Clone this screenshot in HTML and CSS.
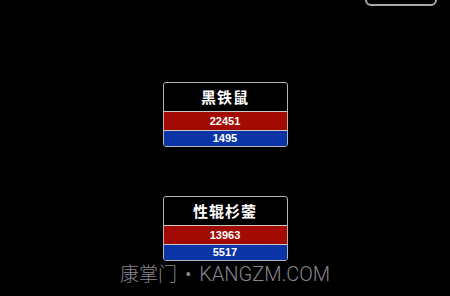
FILE: index.html
```html
<!DOCTYPE html>
<html lang="zh-CN">
<head>
    <meta charset="UTF-8">
    <title>排行</title>
    <link rel="stylesheet" href="styles.css">
</head>
<body>
    <div class="top-btn"></div>

    <div class="board">
        <div class="card">
            <div class="card-title">黑铁鼠</div>
            <div class="card-row red">22451</div>
            <div class="card-row blue">1495</div>
        </div>
        <div class="card">
            <div class="card-title">性辊杉蓥</div>
            <div class="card-row red">13963</div>
            <div class="card-row blue">5517</div>
        </div>
    </div>

    <div class="watermark"><span class="wm-cn">康掌门</span> • KANGZM.COM</div>
</body>
</html>
```

FILE: styles.css
```css
/* 页面 */
html, body {
    margin: 0;
    padding: 0;
}

body {
    background-color: #000;
    width: 450px;
    height: 296px;
    position: relative;
    overflow: hidden;
    font-family: "Liberation Sans", "Noto Sans CJK SC", sans-serif;
}

/* 右上角按钮（只露出下半部分） */
.top-btn {
    position: absolute;
    top: -22px;
    right: 13px;
    width: 68px;
    height: 24px;
    border: 2px solid #a8a8a8;
    border-radius: 6px;
}

/* 卡片列表 */
.board {
    display: flex;
    flex-direction: column;
    align-items: center;
    gap: 49px;
    padding-top: 82px;
}

.card {
    width: 123px;
    border: 1px solid #b4b4b4;
    border-radius: 3px;
    overflow: hidden;
    background-color: #000;
}

.card-title {
    height: 28px;
    line-height: 28px;
    text-align: center;
    color: #fff;
    font-size: 15px;
    font-weight: bold;
    font-family: "Noto Sans CJK SC", sans-serif;
    letter-spacing: 1px;
    border-bottom: 1px solid #c8c8c8;
}

.card-row {
    text-align: center;
    color: #fff;
    font-size: 11px;
    font-weight: bold;
}

.card-row.red {
    background-color: #a20a04;
    height: 18px;
    line-height: 18px;
    border-bottom: 1px solid #c8c8c8;
}

.card-row.blue {
    background-color: #0b35a6;
    height: 15px;
    line-height: 15px;
}

/* 水印 */
.watermark {
    position: absolute;
    left: 120px;
    top: 259px;
    color: #8a8491;
    font-size: 20px;
    font-weight: 300;
    font-family: Roboto, "Noto Sans CJK SC", sans-serif;
    white-space: nowrap;
    word-spacing: 3px;
}

.wm-cn {
    font-size: 19px;
    font-family: "Noto Sans CJK SC", sans-serif;
}
```
